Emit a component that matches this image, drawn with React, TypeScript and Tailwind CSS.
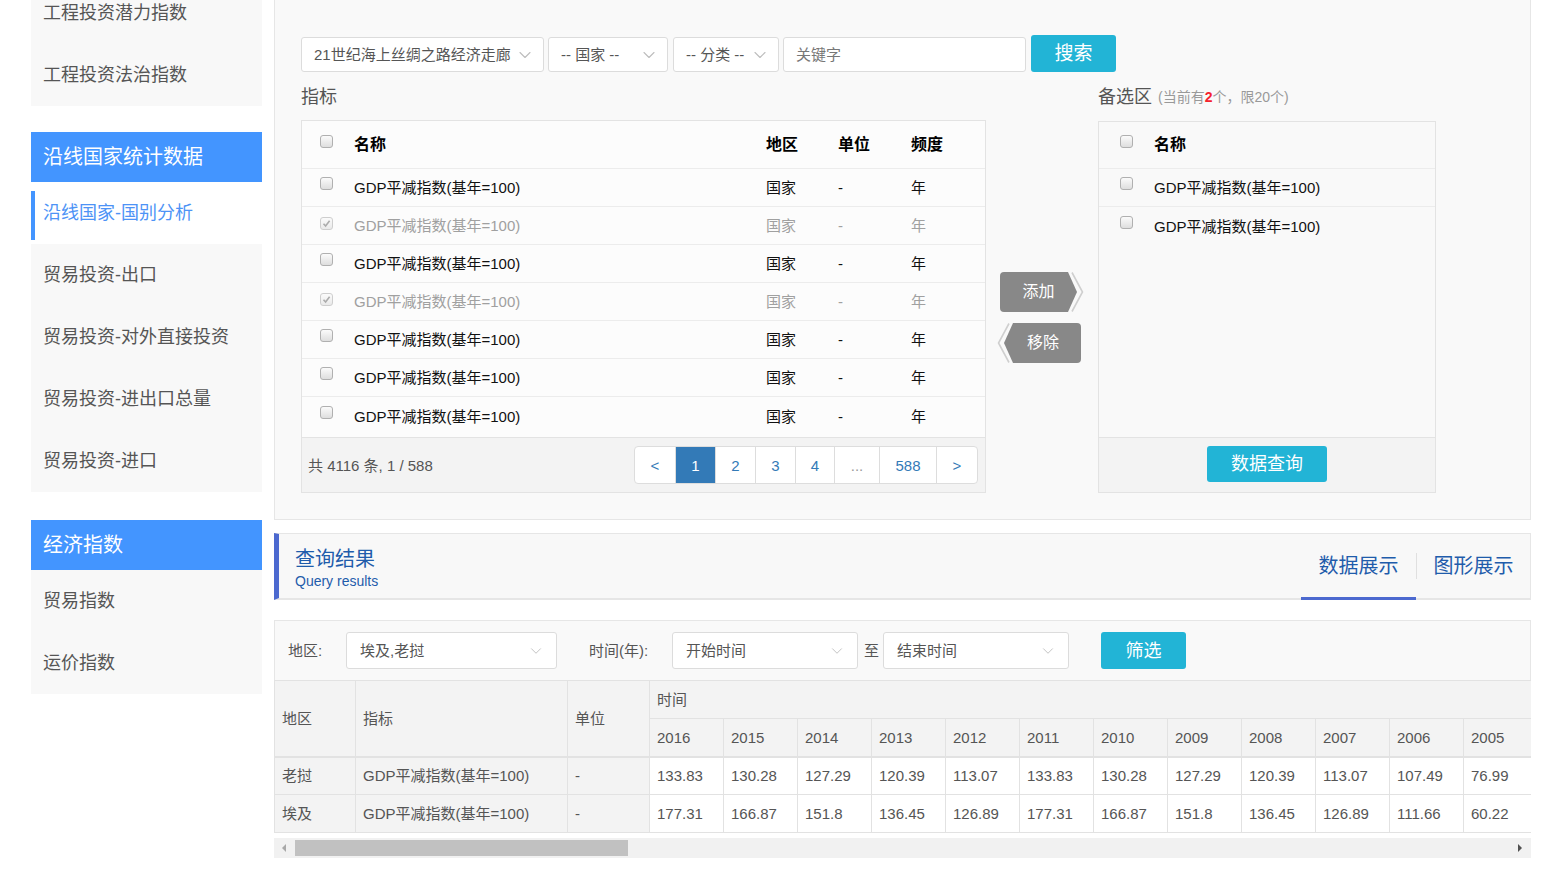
import { ChevronDown } from "lucide-react";

const years = [2016, 2015, 2014, 2013, 2012, 2011, 2010, 2009, 2008, 2007, 2006, 2005];

const results = [
  {
    area: "老挝",
    values: ["133.83", "130.28", "127.29", "120.39", "113.07", "133.83", "130.28", "127.29", "120.39", "113.07", "107.49", "76.99"],
  },
  {
    area: "埃及",
    values: ["177.31", "166.87", "151.8", "136.45", "126.89", "177.31", "166.87", "151.8", "136.45", "126.89", "111.66", "60.22"],
  },
];

// true = already picked, shown greyed out
const indicatorRows = [false, true, false, true, false, false, false];

function CheckBox({ checked, dim }: { checked?: boolean; dim?: boolean }) {
  return (
    <span
      className={`inline-flex h-[13px] w-[13px] items-center justify-center rounded-[3px] border border-[#b0b0b0] bg-linear-to-b from-[#fbfbfb] to-[#dedede] ${dim ? "opacity-60" : ""}`}
    >
      {checked && (
        <svg width="9" height="9" viewBox="0 0 9 9">
          <path d="M1.5 4.8L3.6 7L7.6 1.8" fill="none" stroke="#777" strokeWidth="1.6" />
        </svg>
      )}
    </span>
  );
}

function SelectBox({ width, text }: { width: string; text: string }) {
  return (
    <div
      className={`flex h-[35px] items-center justify-between rounded-[3px] border border-[#dcdcdc] bg-white pl-[12px] pr-[8px] text-[15px] leading-none text-[#555] ${width}`}
    >
      <span className="whitespace-nowrap">{text}</span>
      <ChevronDown size={20} strokeWidth={1.3} color="#bdbdbd" />
    </div>
  );
}

function FilterSelect({ width, text }: { width: string; text: string }) {
  return (
    <div
      className={`flex h-[37px] items-center justify-between rounded-[3px] border border-[#dcdcdc] bg-white pl-[13px] pr-[11px] text-[15px] leading-none text-[#555] ${width}`}
    >
      <span>{text}</span>
      <ChevronDown size={18} strokeWidth={1.2} color="#bdbdbd" />
    </div>
  );
}

function SideItem({ children }: { children: React.ReactNode }) {
  return (
    <div className="flex h-[62px] items-center pl-[12px] text-[18px] leading-none text-[#555]">{children}</div>
  );
}

function SideHeader({ children }: { children: React.ReactNode }) {
  return (
    <div className="flex h-[50px] items-center bg-[#4395ff] pl-[12px] text-[20px] leading-none text-white">{children}</div>
  );
}

function Sidebar() {
  return (
    <aside className="ml-[31px] w-[231px] shrink-0">
      <div className="bg-[#f8f8f8]">
        <div className="flex h-[44px] items-start pl-[12px] text-[18px] leading-[26px] text-[#555]">工程投资潜力指数</div>
        <SideItem>工程投资法治指数</SideItem>
      </div>
      <div className="mt-[26px]">
        <SideHeader>沿线国家统计数据</SideHeader>
      </div>
      <div className="mt-[9px] flex h-[49px] items-center border-l-4 border-[#4395ff] pb-[5px] pl-[8px] text-[18px] leading-none text-[#4d93f6]">
        沿线国家-国别分析
      </div>
      <div className="mt-[4px] bg-[#f8f8f8]">
        <SideItem>贸易投资-出口</SideItem>
        <SideItem>贸易投资-对外直接投资</SideItem>
        <SideItem>贸易投资-进出口总量</SideItem>
        <SideItem>贸易投资-进口</SideItem>
      </div>
      <div className="mt-[28px]">
        <SideHeader>经济指数</SideHeader>
      </div>
      <div className="bg-[#f8f8f8]">
        <SideItem>贸易指数</SideItem>
        <SideItem>运价指数</SideItem>
      </div>
    </aside>
  );
}

function IndicatorTable() {
  const pages = [
    { label: "<", w: "w-[40px]" },
    { label: "1", w: "w-[40px]", active: true },
    { label: "2", w: "w-[40px]" },
    { label: "3", w: "w-[40px]" },
    { label: "4", w: "w-[39px]" },
    { label: "...", w: "w-[45px]", muted: true },
    { label: "588", w: "w-[57px]" },
    { label: ">", w: "w-[41px]" },
  ];
  return (
    <div className="flex h-[373px] flex-col border border-[#e3e3e3] bg-[#fcfcfc]">
      <div className="flex h-[48px] shrink-0 items-center border-b border-[#ececec] text-[16px] font-bold leading-none text-black">
        <div className="w-[52px] pl-[18px]">
          <span className="relative -top-[2px]">
            <CheckBox />
          </span>
        </div>
        <div className="w-[412px]">名称</div>
        <div className="w-[72px]">地区</div>
        <div className="w-[73px]">单位</div>
        <div>频度</div>
      </div>
      {indicatorRows.map((picked, i) => (
        <div
          key={i}
          className={`flex h-[38px] shrink-0 items-center text-[15px] leading-none ${i < indicatorRows.length - 1 ? "border-b border-[#ececec]" : ""} ${picked ? "text-[#a0a0a0]" : "text-[#111]"}`}
        >
          <div className="w-[52px] pl-[18px]">
            <span className="relative -top-[3px]">
              <CheckBox checked={picked} dim={picked} />
            </span>
          </div>
          <div className="w-[412px]">GDP平减指数(基年=100)</div>
          <div className="w-[72px]">国家</div>
          <div className="w-[73px]">-</div>
          <div>年</div>
        </div>
      ))}
      <div className="flex-1" />
      <div className="flex h-[55px] shrink-0 items-center justify-between border-t border-[#e3e3e3] bg-[#f3f3f3] pl-[6px] pr-[7px]">
        <span className="text-[15px] leading-none text-[#555]">共 4116 条, 1 / 588</span>
        <div className="flex h-[38px] overflow-hidden rounded-[4px] border border-[#dddddd] bg-white text-[15px] leading-none">
          {pages.map((p, i) => (
            <div
              key={p.label}
              className={`flex h-full items-center justify-center ${p.w} ${i > 0 ? "border-l border-[#dddddd]" : ""} ${p.active ? "bg-[#337ab7] text-white" : p.muted ? "text-[#9a9a9a]" : "text-[#337ab7]"}`}
            >
              {p.label}
            </div>
          ))}
        </div>
      </div>
    </div>
  );
}

function MoveButtons() {
  return (
    <div className="flex w-[112px] shrink-0 flex-col pl-[14px] pt-[200px]">
      <div className="relative h-[40px] w-[84px]">
        <svg className="absolute inset-0" width="84" height="40" viewBox="0 0 84 40">
          <path d="M4 0H68L77 20L68 40H4A4 4 0 0 1 0 36V4A4 4 0 0 1 4 0Z" fill="#888888" />
          <path d="M72 0.5L82.5 20L72 39.5" fill="none" stroke="#cfcfcf" strokeWidth="1.6" />
        </svg>
        <span className="relative flex h-full w-[77px] items-center justify-center text-[16px] leading-none text-white">
          添加
        </span>
      </div>
      <div className="relative -ml-[3px] mt-[11px] h-[40px] w-[84px]">
        <svg className="absolute inset-0" width="84" height="40" viewBox="0 0 84 40">
          <path d="M80 0H16L7 20L16 40H80A4 4 0 0 0 84 36V4A4 4 0 0 0 80 0Z" fill="#888888" />
          <path d="M12 0.5L1.5 20L12 39.5" fill="none" stroke="#cfcfcf" strokeWidth="1.6" />
        </svg>
        <span className="relative ml-[8px] flex h-full w-[76px] items-center justify-center text-[16px] leading-none text-white">
          移除
        </span>
      </div>
    </div>
  );
}

function PickedBox() {
  return (
    <div className="flex h-[372px] flex-col border border-[#e3e3e3] bg-[#f9f9f9]">
      <div className="flex h-[47px] shrink-0 items-center border-b border-[#ececec] text-[16px] font-bold leading-none text-black">
        <div className="w-[55px] pl-[21px]">
          <span className="relative -top-[2px]">
            <CheckBox />
          </span>
        </div>
        <div>名称</div>
      </div>
      {[0, 1].map((i) => (
        <div
          key={i}
          className={`flex h-[38px] shrink-0 items-center text-[15px] leading-none text-[#111] ${i === 0 ? "border-b border-[#ececec]" : ""}`}
        >
          <div className="w-[55px] pl-[21px]">
            <span className="relative -top-[3px]">
              <CheckBox />
            </span>
          </div>
          <div>GDP平减指数(基年=100)</div>
        </div>
      ))}
      <div className="flex-1" />
      <div className="flex h-[55px] shrink-0 justify-center border-t border-[#e3e3e3] bg-[#f3f3f3] pt-[8px]">
        <button className="h-[36px] w-[120px] rounded-[3px] bg-[#22b4d6] text-[18px] leading-none text-white">数据查询</button>
      </div>
    </div>
  );
}

function SearchPanel() {
  return (
    <section className="h-[520px] border border-t-0 border-[#e6e6e6] bg-[#f9f9f9] pl-[26px] pt-[35px]">
      <div className="flex h-[37px] items-end">
        <SelectBox width="w-[243px]" text="21世纪海上丝绸之路经济走廊" />
        <div className="ml-[4px]">
          <SelectBox width="w-[120px]" text="-- 国家 --" />
        </div>
        <div className="ml-[5px]">
          <SelectBox width="w-[106px]" text="-- 分类 --" />
        </div>
        <div className="ml-[4px] flex h-[35px] w-[243px] items-center rounded-[3px] border border-[#dcdcdc] bg-white pl-[12px] text-[15px] leading-none text-[#777]">
          关键字
        </div>
        <button className="ml-[5px] h-[37px] w-[85px] rounded-[3px] bg-[#22b4d6] text-[19px] leading-none text-white">搜索</button>
      </div>
      <div className="flex">
        <div className="w-[685px] shrink-0">
          <div className="flex h-[48px] items-center pt-[2px] text-[18px] leading-none text-[#555]">指标</div>
          <IndicatorTable />
        </div>
        <MoveButtons />
        <div className="w-[338px] shrink-0">
          <div className="flex h-[49px] items-center text-[18px] leading-none text-[#555]">
            备选区
            <span className="ml-[6px] text-[14px] text-[#999]">
              (当前有<span className="font-bold text-[#f5222d]">2</span>个，限20个)
            </span>
          </div>
          <PickedBox />
        </div>
      </div>
    </section>
  );
}

function ResultHeader() {
  return (
    <section className="mt-[13px] flex h-[67px] border border-b-2 border-l-[5px] border-[#e6e6e6] border-l-[#4c69cf] bg-[#f8f8f8]">
      <div className="pl-[16px] pt-[13px]">
        <div className="text-[20px] leading-[24px] text-[#1f5cab]">查询结果</div>
        <div className="mt-[2px] text-[14px] leading-[16px] text-[#1f5cab]">Query results</div>
      </div>
      <div className="ml-auto flex">
        <div className="relative flex w-[115px] items-center justify-center text-[20px] leading-none text-[#1f5cab]">
          数据展示
          <span className="absolute inset-x-0 -bottom-[2px] h-[3px] bg-[#4c69cf]" />
        </div>
        <span className="h-[26px] w-px self-center bg-[#e0e0e0]" />
        <div className="flex w-[113px] items-center justify-center text-[20px] leading-none text-[#1f5cab]">图形展示</div>
      </div>
    </section>
  );
}

function FilterBar() {
  return (
    <section className="mt-[20px] flex h-[60px] items-center border border-b-0 border-[#e6e6e6] bg-[#f9f9f9] pl-[13px] text-[15px] leading-none text-[#555]">
      <span className="w-[58px]">地区:</span>
      <FilterSelect width="w-[211px]" text="埃及,老挝" />
      <span className="ml-[32px] w-[83px]">时间(年):</span>
      <FilterSelect width="w-[186px]" text="开始时间" />
      <span className="ml-[6px] w-[19px]">至</span>
      <FilterSelect width="w-[186px]" text="结束时间" />
      <button className="ml-[32px] h-[37px] w-[85px] rounded-[3px] bg-[#22b4d6] text-[18px] leading-none text-white">筛选</button>
    </section>
  );
}

function ResultTable() {
  return (
    <div>
      <div className="w-[1257px] overflow-hidden">
        <table className="w-[1263px] table-fixed border-collapse text-left text-[15px] leading-none text-[#555]">
          <colgroup>
            <col className="w-[81px]" />
            <col className="w-[212px]" />
            <col className="w-[82px]" />
            {years.map((y) => (
              <col key={y} className="w-[74px]" />
            ))}
          </colgroup>
          <thead className="bg-[#f3f3f3]">
            <tr className="h-[38px]">
              <th rowSpan={2} className="border border-b-2 border-[#e2e2e2] pl-[7px] font-normal">地区</th>
              <th rowSpan={2} className="border border-b-2 border-[#e2e2e2] pl-[7px] font-normal">指标</th>
              <th rowSpan={2} className="border border-b-2 border-[#e2e2e2] pl-[7px] font-normal">单位</th>
              <th colSpan={12} className="border border-[#e2e2e2] pl-[7px] font-normal">时间</th>
            </tr>
            <tr className="h-[38px]">
              {years.map((y) => (
                <th key={y} className="border border-b-2 border-[#e2e2e2] pl-[7px] font-normal">
                  {y}
                </th>
              ))}
            </tr>
          </thead>
          <tbody>
            {results.map((r) => (
              <tr key={r.area} className="h-[38px]">
                <td className="border border-[#e2e2e2] bg-[#f3f3f3] pl-[7px]">{r.area}</td>
                <td className="border border-[#e2e2e2] bg-[#f3f3f3] pl-[7px]">GDP平减指数(基年=100)</td>
                <td className="border border-[#e2e2e2] bg-[#f3f3f3] pl-[7px]">-</td>
                {r.values.map((v, i) => (
                  <td key={i} className="border border-[#e2e2e2] bg-white pl-[7px]">
                    {v}
                  </td>
                ))}
              </tr>
            ))}
          </tbody>
        </table>
      </div>
      {/* horizontal scrollbar */}
      <div className="mt-[5px] flex h-[20px] w-[1257px] items-center bg-[#f1f1f1]">
        <span className="ml-[8px] h-0 w-0 border-y-[4px] border-r-[4px] border-y-transparent border-r-[#a8a8a8]" />
        <div className="ml-[9px] h-[16px] w-[333px] bg-[#c1c1c1]" />
        <div className="flex-1" />
        <span className="mr-[9px] h-0 w-0 border-y-[4px] border-l-[4px] border-y-transparent border-l-[#505050]" />
      </div>
    </div>
  );
}

export default function App() {
  return (
    <div className="flex min-h-[896px] w-[1566px] bg-white font-['Liberation_Sans','Noto_Sans_CJK_SC',sans-serif]">
      <Sidebar />
      <main className="ml-[12px] w-[1257px] shrink-0">
        <SearchPanel />
        <ResultHeader />
        <FilterBar />
        <ResultTable />
      </main>
    </div>
  );
}
